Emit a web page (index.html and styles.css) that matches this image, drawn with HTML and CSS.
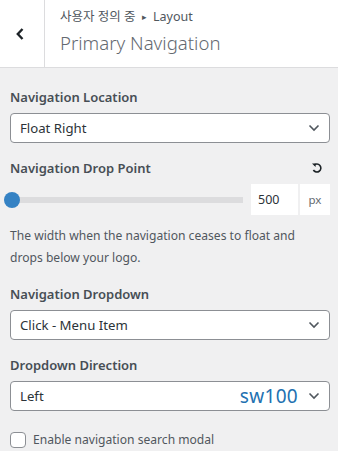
FILE: index.html
```html
<!DOCTYPE html>
<html lang="ko">
<head>
  <meta charset="UTF-8" />
  <meta name="viewport" content="width=device-width, initial-scale=1.0" />
  <title>Primary Navigation</title>
  <link rel="stylesheet" href="styles.css">
</head>
<body>
  <div class="panel-header">
    <button class="back-button" aria-label="Back">
      <svg width="10" height="14" viewBox="0 0 10 14"><path d="M7.5 2 L2.8 7 L7.5 12" fill="none" stroke="#1d2327" stroke-width="2.4"/></svg>
    </button>
    <div class="panel-title">
      <div class="crumb">사용자 정의 중 <span class="crumb-arrow">▸</span> Layout</div>
      <h2>Primary Navigation</h2>
    </div>
  </div>

  <div class="controls">
    <div class="control">
      <label class="control-label">Navigation Location</label>
      <div class="select">
        <span>Float Right</span>
        <svg class="chevron" width="12" height="8" viewBox="0 0 12 8"><path d="M1.5 1.5 L6 6 L10.5 1.5" fill="none" stroke="#50575e" stroke-width="1.6"/></svg>
      </div>
    </div>

    <div class="control">
      <div class="label-row">
        <label class="control-label">Navigation Drop Point</label>
        <svg class="reset" width="12" height="12" viewBox="0 0 12 12"><path d="M3 3.2 A4 4 0 1 1 2.4 8" fill="none" stroke="#1d2327" stroke-width="1.6"/><path d="M1 1.5 L4.6 1.5 L4.6 5 Z" fill="#1d2327"/></svg>
      </div>
      <div class="range-row">
        <div class="range">
          <div class="range-track"></div>
          <div class="range-thumb"></div>
        </div>
        <div class="number-input">500</div>
        <div class="unit">px</div>
      </div>
      <p class="description">The width when the navigation ceases to float and drops below your logo.</p>
    </div>

    <div class="control">
      <label class="control-label">Navigation Dropdown</label>
      <div class="select">
        <span>Click - Menu Item</span>
        <svg class="chevron" width="12" height="8" viewBox="0 0 12 8"><path d="M1.5 1.5 L6 6 L10.5 1.5" fill="none" stroke="#50575e" stroke-width="1.6"/></svg>
      </div>
    </div>

    <div class="control">
      <label class="control-label">Dropdown Direction</label>
      <div class="select">
        <span>Left</span>
        <span class="stamp">sw100</span>
        <svg class="chevron" width="12" height="8" viewBox="0 0 12 8"><path d="M1.5 1.5 L6 6 L10.5 1.5" fill="none" stroke="#50575e" stroke-width="1.6"/></svg>
      </div>
    </div>

    <label class="checkbox-row">
      <span class="checkbox"></span>
      Enable navigation search modal
    </label>
  </div>
</body>
</html>
```

FILE: styles.css
```css
body {
  margin: 0;
  background: #f0f0f1;
  font-family: "Segoe UI", "Noto Sans", "Noto Sans CJK KR", sans-serif;
  color: #3c434a;
  overflow: hidden;
}

.panel-header {
  display: flex;
  height: 67px;
  background: #fff;
  border-bottom: 1px solid #dcdcde;
}

.back-button {
  width: 45px;
  border: none;
  border-right: 1px solid #dcdcde;
  background: #fff;
  display: flex;
  align-items: center;
  justify-content: center;
  padding: 0 4px 0 0;
}

.panel-title {
  padding: 8px 0 0 15px;
}

.crumb {
  font-size: 12.5px;
  line-height: 18px;
  color: #50575e;
}

.crumb-arrow {
  font-size: 9px;
  margin: 0 3px;
  vertical-align: 1px;
}

.panel-title h2 {
  margin: 4px 0 0;
  font-size: 18.6px;
  font-weight: 300;
  line-height: 26px;
  color: #646970;
}

.controls {
  padding: 19px 8px 0 10px;
}

.control {
  margin-bottom: 15px;
}

.control-label {
  display: block;
  font-size: 13px;
  font-weight: 600;
  line-height: 20px;
  color: #474e55;
  margin-bottom: 6px;
}

.label-row {
  display: flex;
  justify-content: space-between;
  align-items: flex-start;
}

.reset {
  margin: 4px 7px 0 0;
}

.select {
  display: flex;
  align-items: center;
  height: 28px;
  border: 1px solid #8c8f94;
  border-radius: 4px;
  background: #fff;
  padding: 0 9px 0 9px;
  font-size: 13.2px;
  color: #2c3338;
}

.select span:first-child {
  flex: 1;
}

.stamp {
  color: #2271b1;
  font-size: 19px;
  margin-right: 10px;
  letter-spacing: 0.3px;
}

.range-row {
  display: flex;
  align-items: center;
}

.range {
  position: relative;
  flex: 1;
  height: 31px;
  margin-right: 8px;
}

.range-track {
  position: absolute;
  left: 2px;
  right: 0;
  top: 13px;
  height: 6px;
  background: #dcdcde;
}

.range-thumb {
  position: absolute;
  left: -6px;
  top: 8px;
  width: 16px;
  height: 16px;
  border-radius: 50%;
  background: #3582c4;
}

.number-input {
  width: 40px;
  height: 31px;
  line-height: 31px;
  background: #fff;
  padding-left: 7px;
  font-size: 12.5px;
  color: #2c3338;
  margin-right: 2px;
}

.unit {
  width: 30px;
  height: 31px;
  line-height: 31px;
  background: #fff;
  text-align: center;
  font-size: 11.5px;
  color: #646970;
}

.description {
  margin: 10px 0 0;
  font-size: 12.1px;
  line-height: 22px;
  color: #50575e;
}

.checkbox-row {
  display: flex;
  align-items: center;
  gap: 7px;
  font-size: 12.1px;
  color: #50575e;
  margin-top: 20px;
}

.checkbox {
  width: 14px;
  height: 14px;
  border: 1px solid #8c8f94;
  border-radius: 4px;
  background: #fff;
}
```
